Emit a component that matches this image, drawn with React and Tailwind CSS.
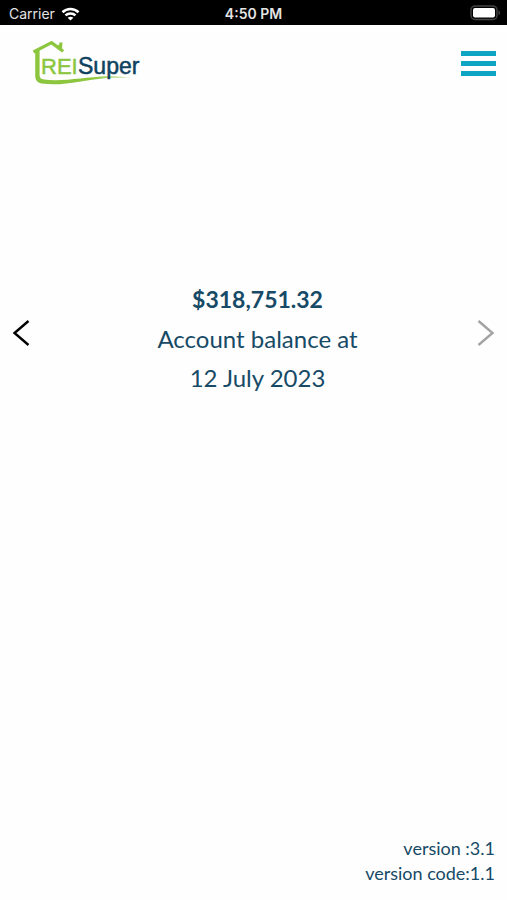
import { useState } from 'react';

const slides = [
  { value: '', lines: [] },
  { value: '$318,751.32', lines: ['Account balance at', '12 July 2023'] },
];

function StatusBar() {
  return (
    <div className="grid h-[25px] grid-cols-3 items-center bg-black font-['Inter',sans-serif] text-sm leading-none text-[#e4e4e4]">
      <div className="flex items-center gap-[6px] pt-[2px] pl-[9px]">
        <span>Carrier</span>
        <svg width="19" height="14" viewBox="0 0 18 14" fill="none" stroke="#fff" strokeWidth="2.6" aria-hidden="true">
          <path d="M1 5.2C5.5 .9 12.5 .9 17 5.2" />
          <path d="M4 8.4c2.8-2.6 7.2-2.6 10 0" />
          <path d="M9 13.6 6.1 10.8c1.7-1.4 4.1-1.4 5.8 0z" fill="#fff" stroke="none" />
        </svg>
      </div>
      <span className="pt-[2px] text-center font-semibold">4:50 PM</span>
      <div className="flex justify-end pr-[6px]">
        <svg width="31" height="16" viewBox="0 0 31 16" aria-hidden="true">
          <rect x="1" y="1" width="26" height="13.5" rx="4" fill="none" stroke="#444" strokeWidth="1.4" />
          <rect x="3" y="3" width="22" height="9.5" rx="2" fill="#fff" />
          <path d="M28.5 5.3c2 .8 2 4.1 0 4.9z" fill="#444" />
        </svg>
      </div>
    </div>
  );
}

function Logo() {
  return (
    <svg width="110" height="46" viewBox="0 0 110 46" role="img" aria-label="REI Super">
      <defs>
        <linearGradient id="sweep" x1="0" x2="1">
          <stop offset="0.6" stopColor="#8cc63f" />
          <stop offset="1" stopColor="#8cc63f" stopOpacity="0.35" />
        </linearGradient>
      </defs>
      {/* Roof and chimney */}
      <path d="M1.500 13 19.500 3.600 31 12.200" fill="none" stroke="#8cc63f" strokeWidth="3.2" strokeLinejoin="round" />
      <path d="M25 6.500 27 6l.5-2.500h3L30 9.500l2 2.500-2 .5-5-4z" fill="#8cc63f" />
      {/* Wall and ground sweep */}
      <path
        d="M3.200 11.500h4.400V36c0 3 1.300 4 4.500 4.400C30 43 52 38 75 37.200c10-.2 18 .8 25 2-9-.6-17-.6-27 0C52 41 31 47.500 9.500 44.500 5 43.600 3.200 41 3.200 36z"
        fill="url(#sweep)"
      />
      <g fontFamily="Liberation Sans, sans-serif" strokeWidth="0.5">
        <text x="9" y="35" fill="#8cc63f" stroke="#8cc63f" fontSize="22">
          REI
        </text>
        <text x="46" y="35" fill="#0d4260" stroke="#0d4260" fontSize="23">
          Super
        </text>
      </g>
    </svg>
  );
}

export default function App() {
  const [index, setIndex] = useState(1);
  const slide = slides[index];

  return (
    <div className="flex min-h-screen flex-col bg-[#fefefe] font-['Lato',sans-serif] text-[#164a66]">
      <StatusBar />

      <header className="flex items-start justify-between pt-[14px] pr-[11px] pl-8">
        <a href="#home">
          <Logo />
        </a>
        <button type="button" aria-label="Menu" className="mt-3 flex w-[35px] flex-col gap-[5px]">
          <span className="h-[5px] w-full bg-[#0ea5c4]" />
          <span className="h-[5px] w-full bg-[#0ea5c4]" />
          <span className="h-[5px] w-full bg-[#0ea5c4]" />
        </button>
      </header>

      <main className="flex-1 pt-[183px]">
        <section className="flex items-center justify-between px-3">
          <button type="button" aria-label="Previous" onClick={() => setIndex(Math.max(index - 1, 0))}>
            <svg width="18" height="28" viewBox="0 0 18 28" fill="none" stroke="#000" strokeWidth="2.4">
              <path d="M16.500 2 2.500 14l14 12" />
            </svg>
          </button>
          <div className="h-[129px] flex-1 pt-3 pl-2 text-center text-2xl leading-[39px]">
            <p className="text-[23px] leading-[39px] font-bold">{slide.value}</p>
            {slide.lines.map((line) => (
              <p key={line}>{line}</p>
            ))}
          </div>
          <button
            type="button"
            aria-label="Next"
            disabled={index === slides.length - 1}
            onClick={() => setIndex(index + 1)}
          >
            <svg width="18" height="28" viewBox="0 0 18 28" fill="none" stroke="#a3a3a3" strokeWidth="2.4">
              <path d="m1.500 2 14 12-14 12" />
            </svg>
          </button>
        </section>
      </main>

      <footer className="pr-3 pb-[14px] text-right text-lg leading-[25px]">
        <p>version :3.1</p>
        <p>version code:1.1</p>
      </footer>
    </div>
  );
}
